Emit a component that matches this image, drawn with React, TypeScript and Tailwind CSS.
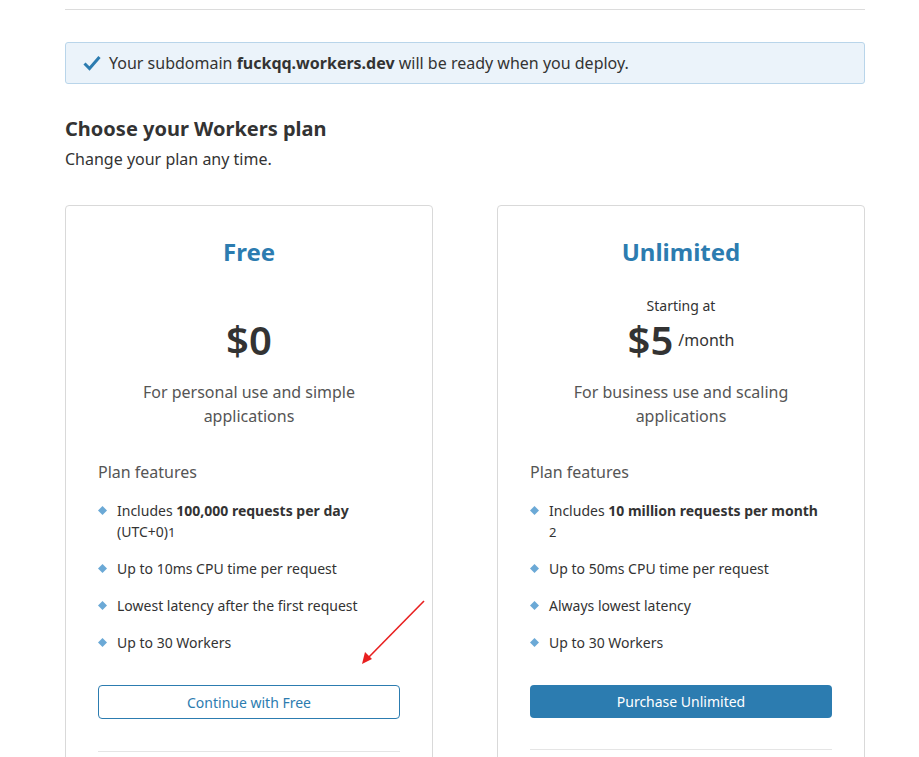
import React from "react";

const Diamond = () => (
  <svg width="19" height="21" viewBox="0 0 19 21" className="shrink-0">
    <polygon points="4.5,6 9,10.5 4.5,15 0,10.5" fill="#6ba9d6" />
  </svg>
);

const Feature = ({ children }: { children: React.ReactNode }) => (
  <li className="flex items-start">
    <Diamond />
    <span className="leading-[21px]">{children}</span>
  </li>
);

export default function App() {
  return (
    <div
      className="relative min-h-[757px] bg-white text-[#333]"
      style={{ fontFamily: '"Noto Sans", "Open Sans", sans-serif' }}
    >
      <div className="mx-[65px] w-[800px] pt-[9px]">
        <div className="h-px bg-[#dcdcdc]" />
        <div className="mt-[32px] flex h-[42px] items-center rounded-[3px] border border-[#b9d5ea] bg-[#ebf3fa] px-[17px]">
          <svg width="18" height="16" viewBox="0 0 18 16" className="mr-[8px]">
            <path d="M1.5 8.5 L6.5 13.5 L16.5 2" fill="none" stroke="#2c7cb0" strokeWidth="3" />
          </svg>
          <span className="text-[16px] leading-[24px]">
            Your subdomain <b>fuckqq.workers.dev</b> will be ready when you deploy.
          </span>
        </div>
        <h2 className="mt-[31px] text-[20px] font-bold leading-[28px]">Choose your Workers plan</h2>
        <p className="mt-[4px] text-[16px] leading-[24px]">Change your plan any time.</p>

        <div className="mt-[34px] grid grid-cols-[368px_368px] gap-[64px]">
          {/* Free */}
          <div className="rounded-[4px] border border-[#d9d9d9] px-[32px] pt-[30px]">
            <h3 className="text-center text-[24px] font-bold leading-[32px] text-[#2c7cb0]">Free</h3>
            <div className="mt-[28px] h-[20px]" />
            <div className="text-center text-[40px] font-semibold leading-[48px]">$0</div>
            <p className="mt-[16px] text-center text-[16px] leading-[24px] text-[#555]">
              For personal use and simple
              <br />
              applications
            </p>
            <p className="mt-[32px] text-[16px] leading-[24px] text-[#555]">Plan features</p>
            <ul className="mt-[16px] flex flex-col gap-[16px] text-[14px]">
              <Feature>
                Includes <b>100,000 requests per day</b>
                <br />
                (UTC+0)<span className="text-[13px] leading-none">1</span>
              </Feature>
              <Feature>Up to 10ms CPU time per request</Feature>
              <Feature>Lowest latency after the first request</Feature>
              <Feature>Up to 30 Workers</Feature>
            </ul>
            <button className="mt-[32px] h-[34px] w-full rounded-[4px] border border-[#2c7cb0] bg-white text-[14px] text-[#2c7cb0]">
              Continue with Free
            </button>
            <div className="mt-[32px] h-px bg-[#e5e5e5]" />
            <div className="h-[20px]" />
          </div>

          {/* Unlimited */}
          <div className="rounded-[4px] border border-[#d9d9d9] px-[32px] pt-[30px]">
            <h3 className="text-center text-[24px] font-bold leading-[32px] text-[#2c7cb0]">Unlimited</h3>
            <div className="mt-[28px] text-center text-[14px] leading-[20px]">Starting at</div>
            <div className="flex items-center justify-center">
              <span className="text-[40px] font-semibold leading-[48px]">$5</span>
              <span className="ml-[5px] text-[16px]">/month</span>
            </div>
            <p className="mt-[16px] text-center text-[16px] leading-[24px] text-[#555]">
              For business use and scaling
              <br />
              applications
            </p>
            <p className="mt-[32px] text-[16px] leading-[24px] text-[#555]">Plan features</p>
            <ul className="mt-[16px] flex flex-col gap-[16px] text-[14px]">
              <Feature>
                Includes <b>10 million requests per month</b>
                <br />
                <span className="text-[13px] leading-none">2</span>
              </Feature>
              <Feature>Up to 50ms CPU time per request</Feature>
              <Feature>Always lowest latency</Feature>
              <Feature>Up to 30 Workers</Feature>
            </ul>
            <button className="mt-[32px] h-[33px] w-full rounded-[4px] bg-[#2c7cb0] text-[14px] text-white">
              Purchase Unlimited
            </button>
            <div className="mt-[31px] h-px bg-[#e5e5e5]" />
            <div className="h-[20px]" />
          </div>
        </div>
      </div>

      <svg className="pointer-events-none absolute left-0 top-0" width="919" height="757">
        <line x1="424" y1="601" x2="368" y2="658" stroke="#e82020" strokeWidth="1.6" />
        <polygon points="362,664 365,652 372,659" fill="#e82020" />
      </svg>
    </div>
  );
}
